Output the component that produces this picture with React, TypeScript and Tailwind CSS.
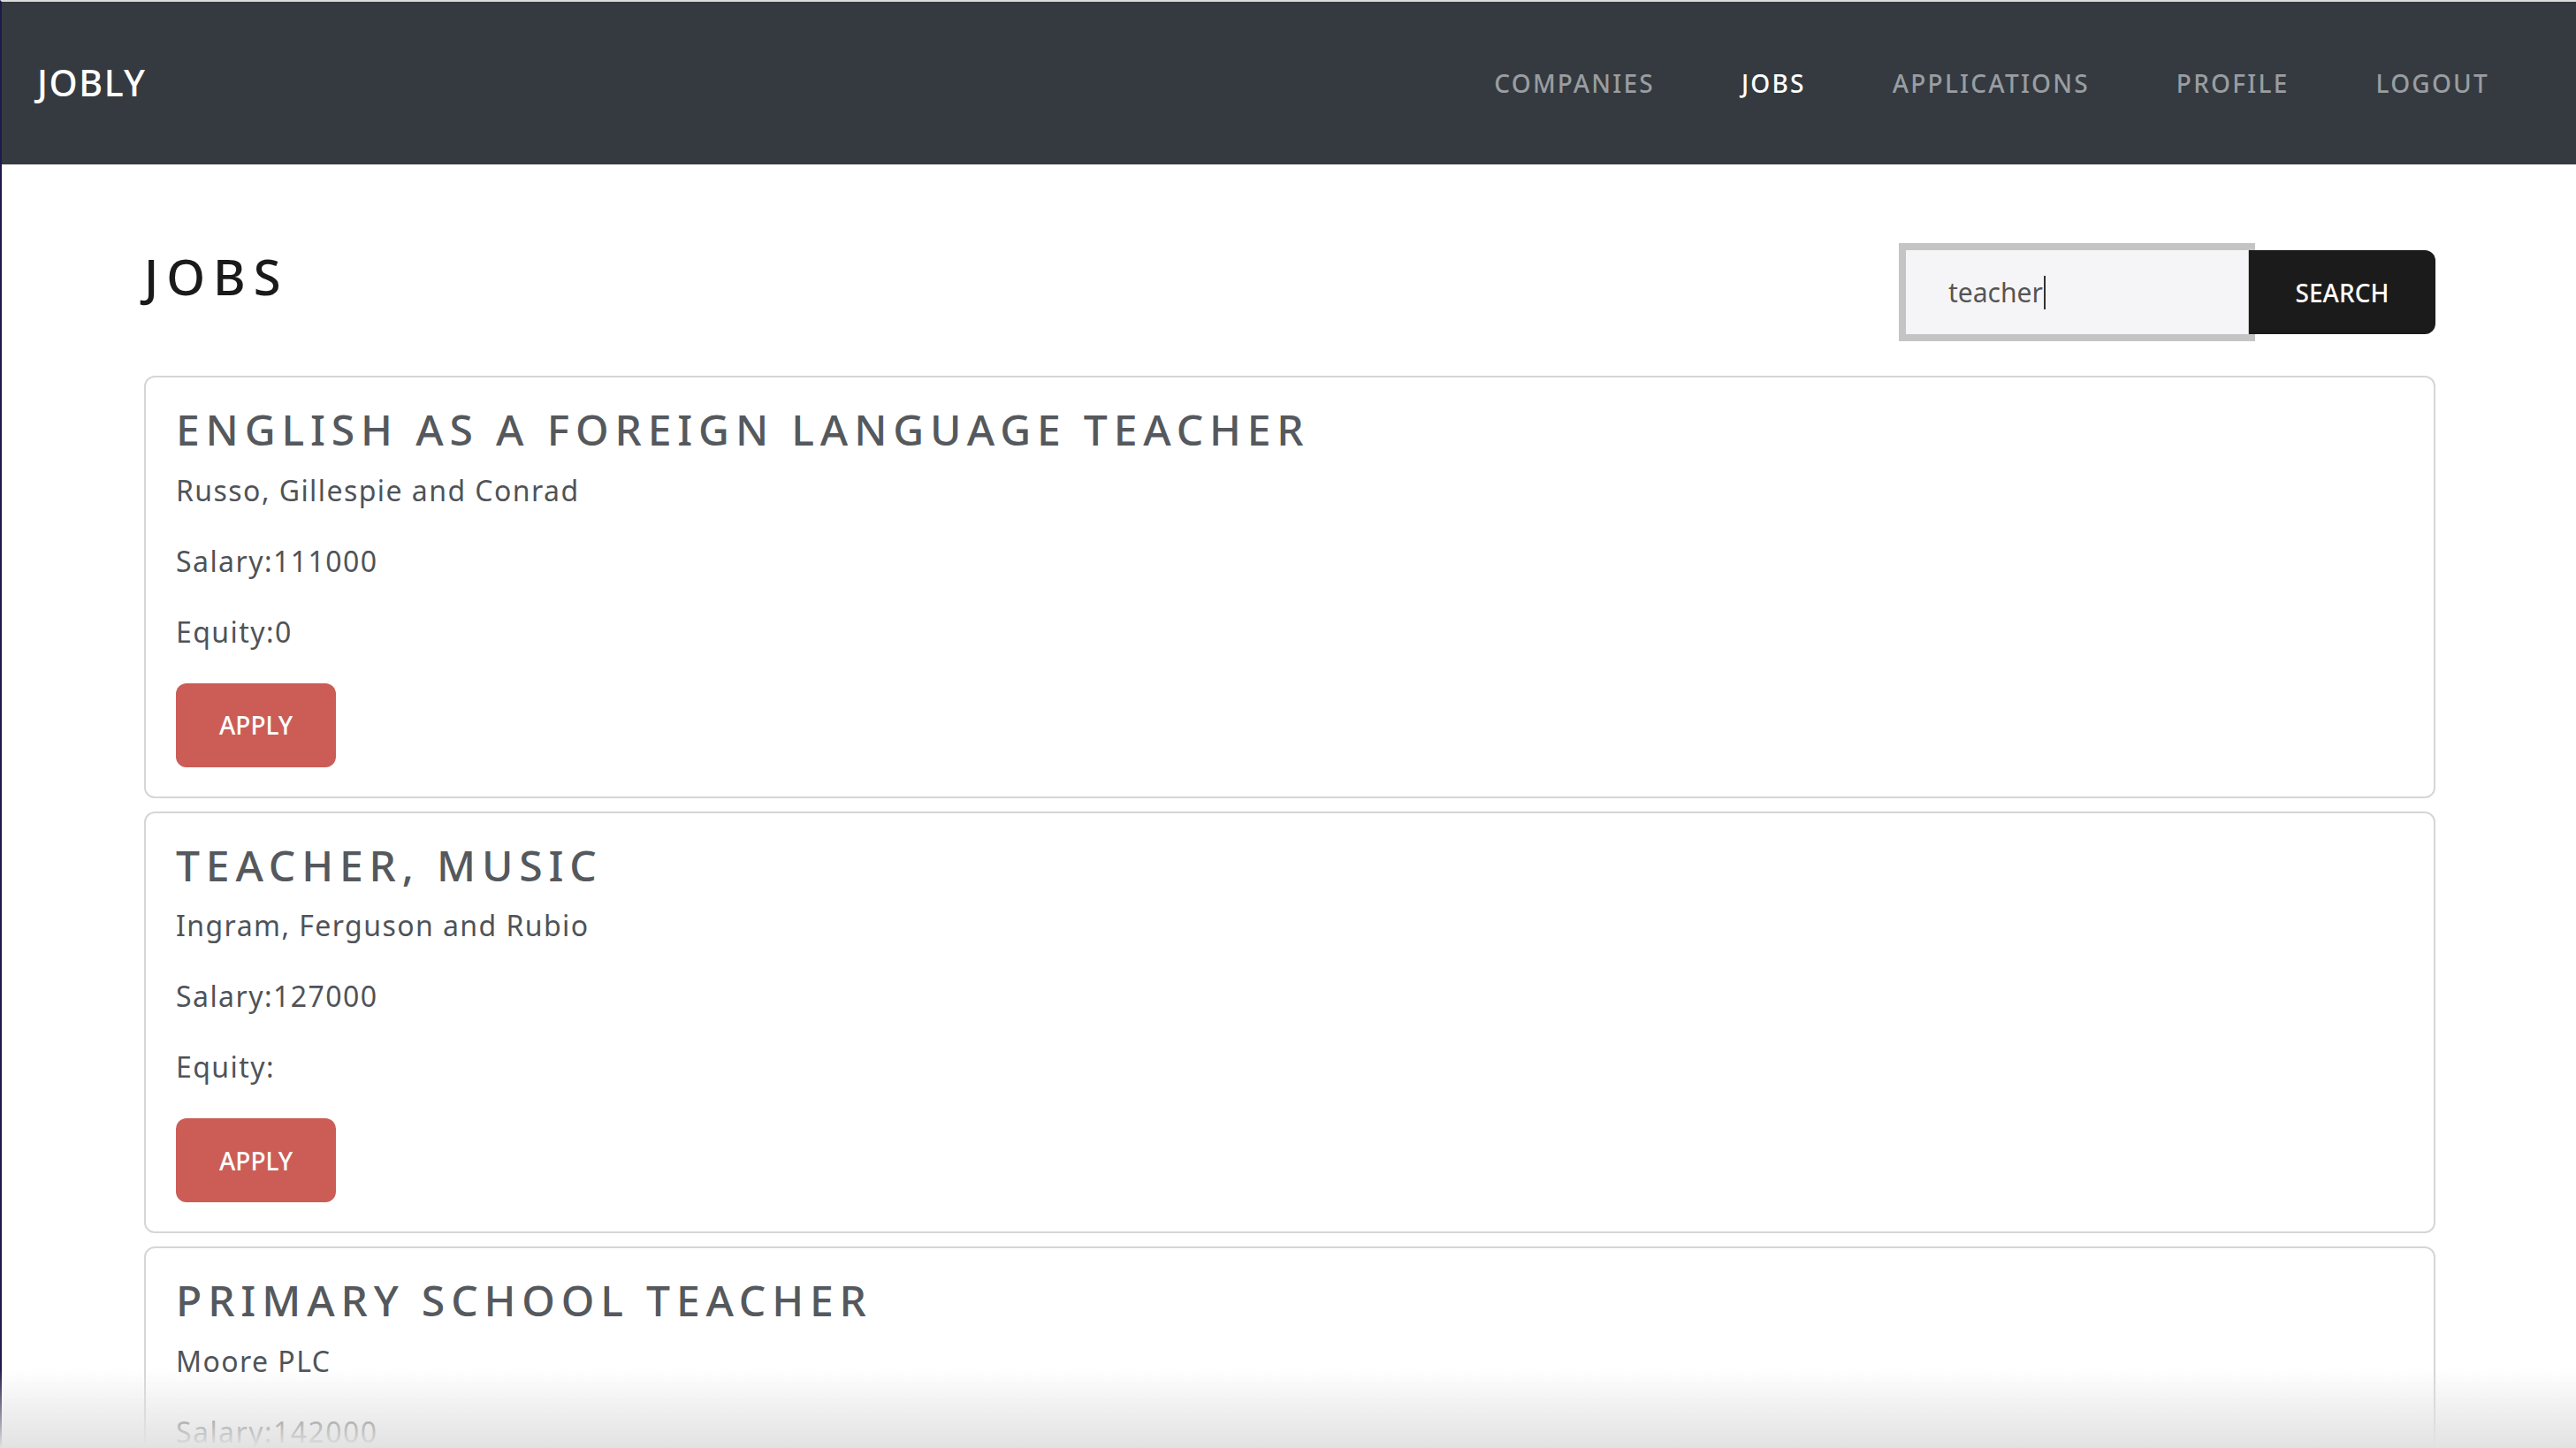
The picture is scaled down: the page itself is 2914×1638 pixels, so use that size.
import React from 'react';

const jobs = [
  {
    title: 'English as a Foreign Language Teacher',
    company: 'Russo, Gillespie and Conrad',
    salary: '111000',
    equity: '0',
  },
  {
    title: 'Teacher, music',
    company: 'Ingram, Ferguson and Rubio',
    salary: '127000',
    equity: '',
  },
  {
    title: 'Primary school teacher',
    company: 'Moore PLC',
    salary: '142000',
    equity: '0',
  },
];

const navLinks = ['Companies', 'Jobs', 'Applications', 'Profile', 'Logout'];

const font = { fontFamily: '"Noto Sans", "Open Sans", sans-serif' };

const JobCard = ({ job }: { job: (typeof jobs)[number] }) => (
  <div className="border-2 border-[#d6d6d6] rounded-[12px] bg-white px-[34px] pt-[30px] pb-[33px]">
    <h3 className="text-[48px] leading-[1.2] uppercase tracking-[0.143em] text-[#55595d] font-medium">
      {job.title}
    </h3>
    <div className="mt-[16px] flex flex-col gap-[32px] text-[32px] leading-[48px] tracking-[0.045em] text-[#4f5358]">
      <p>{job.company}</p>
      <p>Salary:{job.salary}</p>
      <p>Equity:{job.equity}</p>
    </div>
    <button className="mt-[34px] w-[181px] h-[95px] rounded-[12px] bg-[#cb5d56] text-white text-[28px] font-medium uppercase">
      Apply
    </button>
  </div>
);

export default function App() {
  return (
    <div
      className="min-h-screen bg-white border-l-2 border-t-2 border-l-[#1d1a4a] border-t-[#dcdcdc]"
      style={font}
    >
      <nav className="h-[184px] bg-[#343a40] flex items-center justify-between pl-[40px] pr-[98px]">
        <span className="text-white text-[41px] tracking-[0.04em] font-medium">JOBLY</span>
        <ul className="flex items-center gap-[98px]">
          {navLinks.map((link) => (
            <li
              key={link}
              className={`text-[28px] uppercase tracking-[0.08em] font-medium ${
                link === 'Jobs' ? 'text-white' : 'text-[#9a9da1]'
              }`}
            >
              {link}
            </li>
          ))}
        </ul>
      </nav>

      <main className="pl-[161px] pr-[159px] pt-[89px] pb-[60px]">
        <div className="flex items-start justify-between mb-[39px]">
          <h1 className="mt-[4px] text-[56px] leading-[1.2] tracking-[0.16em] text-[#1a1a1a] font-medium">
            JOBS
          </h1>
          <div className="flex items-center">
            <div className="w-[403px] h-[111px] border-[8px] border-[#c4c4c4] bg-[#f5f5f7] flex items-center pl-[48px] text-[30px] text-[#555]">
              teacher
              <span className="inline-block w-[2px] h-[38px] bg-[#333] ml-[1px]" />
            </div>
            <button className="relative -ml-[7px] w-[211px] h-[95px] bg-[#1b1b1b] rounded-r-[12px] text-white text-[28px] font-medium uppercase">
              Search
            </button>
          </div>
        </div>

        <div className="flex flex-col gap-[15px]">
          {jobs.map((job) => (
            <JobCard key={job.title} job={job} />
          ))}
        </div>
      </main>

      <div className="pointer-events-none fixed bottom-0 left-0 right-0 h-[90px] bg-gradient-to-b from-white/0 to-[#e2e2e2]" />
    </div>
  );
}
